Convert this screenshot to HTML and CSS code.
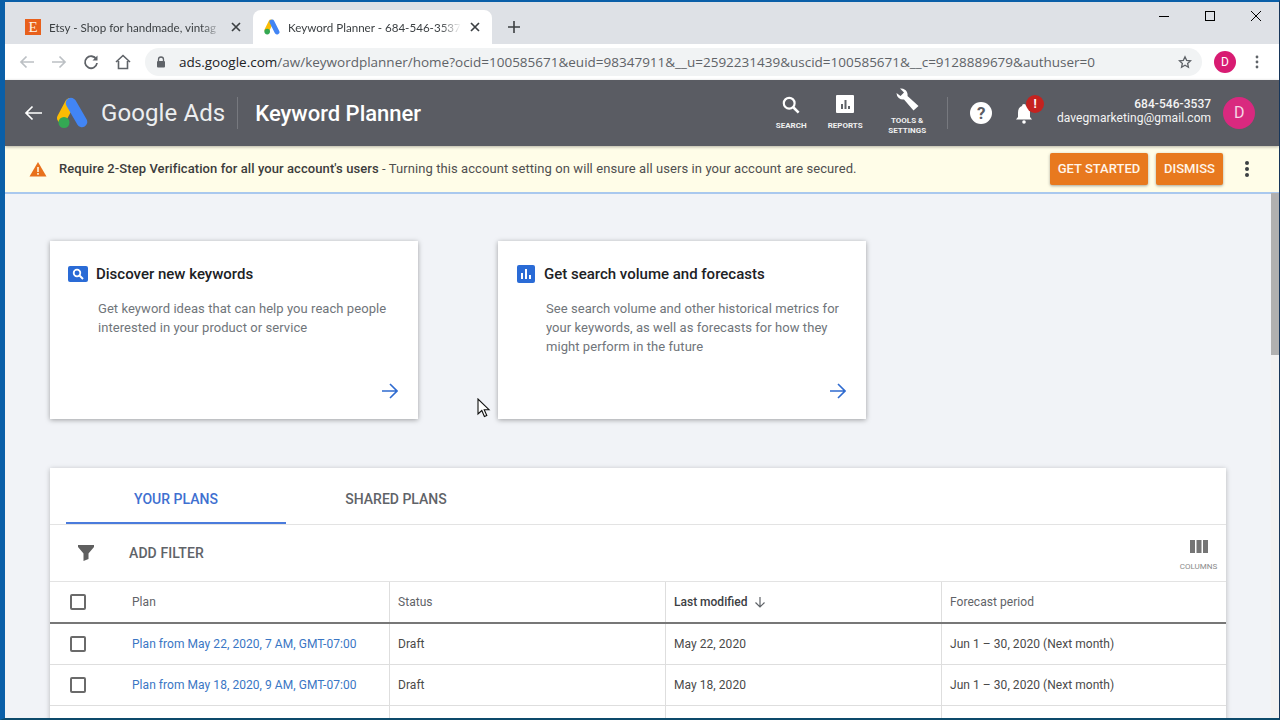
FILE: index.html
```html
<!DOCTYPE html>
<html lang="en">
<head>
<meta charset="utf-8">
<title>Keyword Planner</title>
<link rel="stylesheet" href="styles.css">
</head>
<body>
<div class="window">
  <div class="tabstrip">
    <div class="tab">
      <span class="etsy">E</span>
      <span class="tab-title">Etsy - Shop for handmade, vintag</span>
      <svg class="tab-x" width="10" height="10" viewBox="0 0 10 10"><path d="M1 1l8 8M9 1l-8 8" stroke="#3c4043" stroke-width="1.7"/></svg>
    </div>
    <div class="tab active">
      <svg class="favicon" width="16" height="16" viewBox="0 0 16 16"><path d="M7 3L3 11" stroke="#fbbc04" stroke-width="5" stroke-linecap="round"/><path d="M8 3l5 10" stroke="#4285f4" stroke-width="5" stroke-linecap="round"/><circle cx="3.2" cy="12.6" r="2.8" fill="#34a853"/></svg>
      <span class="tab-title">Keyword Planner - 684-546-3537</span>
      <svg class="tab-x" width="10" height="10" viewBox="0 0 10 10"><path d="M1 1l8 8M9 1l-8 8" stroke="#3c4043" stroke-width="1.7"/></svg>
    </div>
    <svg class="newtab" width="12" height="12" viewBox="0 0 12 12"><path d="M6 0v12M0 6h12" stroke="#3c4043" stroke-width="1.6"/></svg>
    <div class="winctl">
      <svg width="12" height="12" viewBox="0 0 12 12"><path d="M1 6.500h10" stroke="#000" stroke-width="1"/></svg>
      <svg width="12" height="12" viewBox="0 0 12 12"><rect x="1.500" y="1.500" width="9" height="9" fill="none" stroke="#000" stroke-width="1"/></svg>
      <svg width="12" height="12" viewBox="0 0 12 12"><path d="M1 1l10 10M11 1L1 11" stroke="#000" stroke-width="1"/></svg>
    </div>
  </div>

  <div class="toolbar">
    <svg class="tb-icon" width="16" height="16" viewBox="0 0 16 16"><path d="M15 8H2M7.500 2.500L2 8l5.500 5.500" fill="none" stroke="#bcc0c4" stroke-width="1.7"/></svg>
    <svg class="tb-icon" width="16" height="16" viewBox="0 0 16 16"><path d="M1 8h13M8.500 2.500L14 8l-5.500 5.500" fill="none" stroke="#bcc0c4" stroke-width="1.700"/></svg>
    <svg class="tb-icon" width="16" height="16" viewBox="0 0 16 16"><path d="M13.300 5.300A6 6 0 1 0 14 9" fill="none" stroke="#5f6368" stroke-width="1.800"/><path d="M14.500 1.500v5h-5z" fill="#5f6368"/></svg>
    <svg class="tb-icon" width="16" height="16" viewBox="0 0 16 16"><path d="M1 8l7-6.500L15 8M3.500 7v7.500h9V7" fill="none" stroke="#5f6368" stroke-width="1.600"/></svg>
    <div class="omnibox">
      <svg width="10" height="12" viewBox="0 0 10 12"><path d="M2.500 5V3.500a2.500 2.500 0 0 1 5 0V5" fill="none" stroke="#5f6368" stroke-width="1.300"/><rect x="1" y="5" width="8" height="6.500" rx="1" fill="#5f6368"/></svg>
      <span class="url"><span class="host">ads.google.com</span>/aw/keywordplanner/home?ocid=100585671&amp;euid=98347911&amp;__u=2592231439&amp;uscid=100585671&amp;__c=9128889679&amp;authuser=0</span>
      <svg class="star" width="14" height="14" viewBox="0 0 24 24"><path d="M12 3l2.800 6.200 6.700.7-5 4.500 1.400 6.600L12 17.600 6.100 21l1.400-6.600-5-4.500 6.700-.7z" fill="none" stroke="#5f6368" stroke-width="2.200"/></svg>
    </div>
    <span class="chrome-avatar">D</span>
    <svg class="chrome-menu" width="4" height="14" viewBox="0 0 4 14"><circle cx="2" cy="2" r="1.400" fill="#5f6368"/><circle cx="2" cy="7" r="1.400" fill="#5f6368"/><circle cx="2" cy="12" r="1.400" fill="#5f6368"/></svg>
  </div>

  <header class="adsbar">
    <svg class="back" width="18" height="16" viewBox="0 0 18 16"><path d="M18 8H2M8.500 1.500L2 8l6.500 6.500" fill="none" stroke="#fff" stroke-width="1.700"/></svg>
    <svg class="adslogo" width="32" height="32" viewBox="0 0 32 32"><path d="M13 6L5 21" stroke="#fbbc04" stroke-width="10" stroke-linecap="round"/><path d="M14 6l11 19" stroke="#4285f4" stroke-width="10.500" stroke-linecap="round"/><circle cx="7" cy="25.500" r="5.500" fill="#34a853"/></svg>
    <span class="brand">Google Ads</span>
    <span class="vline brand-line"></span>
    <span class="pagetitle">Keyword Planner</span>
    <div class="adstools">
      <div class="tool tool-search">
        <svg width="18" height="18" viewBox="0 0 20 20"><circle cx="8" cy="8" r="6" fill="none" stroke="#fff" stroke-width="2.400"/><path d="M12.500 12.500L18.500 18.500" stroke="#fff" stroke-width="2.800"/></svg>
        <span>SEARCH</span>
      </div>
      <div class="tool tool-reports">
        <svg width="18" height="18" viewBox="0 0 18 18"><rect width="18" height="18" rx="1" fill="#fff"/><path d="M5 9h2v5H5zM8.500 5h2v9h-2zM12 11h2v3h-2z" fill="#5f6368"/></svg>
        <span>REPORTS</span>
      </div>
      <div class="tool tool-settings">
        <svg width="24" height="24" viewBox="0 0 24 24"><path d="M1.500 5A6.500 6.500 0 0 0 9 11.500l9.500 11 5-4.500-11-10A6.500 6.500 0 0 0 5 .5L9 4.500 5.500 8z" fill="#fff"/></svg>
        <span>TOOLS &amp;<br>SETTINGS</span>
      </div>
    </div>
    <span class="vline tools-line"></span>
    <span class="help">?</span>
    <div class="bell">
      <svg width="20" height="22" viewBox="0 0 20 22"><path d="M10 2a2 2 0 0 1 2 2c3 1 4 3.500 4 7v4l2 2.500H2L4 15v-4c0-3.500 1-6 4-7a2 2 0 0 1 2-2z" fill="#fff"/><circle cx="10" cy="20" r="1.800" fill="#fff"/></svg>
      <span class="badge">!</span>
    </div>
    <div class="account">
      <span class="acc-num">684-546-3537</span>
      <span class="acc-mail">davegmarketing@gmail.com</span>
    </div>
    <span class="avatar">D</span>
  </header>

  <div class="banner">
    <svg class="warn" width="18" height="16" viewBox="0 0 18 16"><path d="M9 1l8.500 14.500H.5z" fill="#e8711c"/><path d="M8.200 6h1.600v5H8.200zM8.200 12h1.600v1.700H8.200z" fill="#fff8e0"/></svg>
    <p class="banner-text"><b>Require 2-Step Verification for all your account's users</b> - Turning this account setting on will ensure all users in your account are secured.</p>
    <button class="cta cta-start">GET STARTED</button>
    <button class="cta cta-dismiss">DISMISS</button>
    <svg class="banner-menu" width="6" height="16" viewBox="0 0 6 16"><circle cx="3" cy="2" r="2" fill="#3c4043"/><circle cx="3" cy="8" r="2" fill="#3c4043"/><circle cx="3" cy="14" r="2" fill="#3c4043"/></svg>
  </div>

  <div class="viewport">
    <main class="content">
      <section class="cards">
        <article class="card">
          <h2 class="card-title">
            <span class="card-icon"><svg width="12" height="12" viewBox="0 0 12 12"><circle cx="5" cy="5" r="3.300" fill="none" stroke="#fff" stroke-width="1.800"/><path d="M7.500 7.500L11 11" stroke="#fff" stroke-width="2"/></svg></span>
            Discover new keywords
          </h2>
          <p class="card-desc">Get keyword ideas that can help you reach people interested in your product or service</p>
          <svg class="card-arrow" width="16" height="16" viewBox="0 0 16 16"><path d="M0 8h15M8 1l7 7-7 7" fill="none" stroke="#2f6bd0" stroke-width="1.600"/></svg>
        </article>
        <article class="card">
          <h2 class="card-title">
            <span class="card-icon card-icon-tall"><svg width="12" height="12" viewBox="0 0 12 12"><path d="M1 5h2v6H1zM5 1h2v10H5zM9 7h2v4H9z" fill="#fff"/></svg></span>
            Get search volume and forecasts
          </h2>
          <p class="card-desc">See search volume and other historical metrics for your keywords, as well as forecasts for how they might perform in the future</p>
          <svg class="card-arrow" width="16" height="16" viewBox="0 0 16 16"><path d="M0 8h15M8 1l7 7-7 7" fill="none" stroke="#2f6bd0" stroke-width="1.600"/></svg>
        </article>
      </section>

      <section class="plans">
        <div class="plan-tabs">
          <span class="plan-tab current">YOUR PLANS</span>
          <span class="plan-tab">SHARED PLANS</span>
        </div>
        <div class="filter-row">
          <svg width="16" height="16" viewBox="0 0 16 16"><path d="M0 0h16v2l-5.500 6.500V14L5.500 16V8.500L0 2z" fill="#5f5f5f"/></svg>
          <span class="add-filter">ADD FILTER</span>
          <div class="columns-btn">
            <svg width="18" height="13" viewBox="0 0 18 13"><path d="M0 0h5v13H0zM6.500 0h5v13h-5zM13 0h5v13h-5z" fill="#757575"/></svg>
            <span>COLUMNS</span>
          </div>
        </div>
        <div class="row head">
          <div class="cell first"><span class="check"></span><span>Plan</span></div>
          <div class="cell">Status</div>
          <div class="cell sorted">Last modified
            <svg width="12" height="12" viewBox="0 0 12 12"><path d="M6 1v10M1.500 6.500L6 11l4.500-4.500" fill="none" stroke="#5f6368" stroke-width="1.200"/></svg>
          </div>
          <div class="cell">Forecast period</div>
        </div>
        <div class="row">
          <div class="cell first"><span class="check"></span><a class="plan-link">Plan from May 22, 2020, 7 AM, GMT-07:00</a></div>
          <div class="cell">Draft</div>
          <div class="cell">May 22, 2020</div>
          <div class="cell">Jun 1 – 30, 2020 (Next month)</div>
        </div>
        <div class="row">
          <div class="cell first"><span class="check"></span><a class="plan-link">Plan from May 18, 2020, 9 AM, GMT-07:00</a></div>
          <div class="cell">Draft</div>
          <div class="cell">May 18, 2020</div>
          <div class="cell">Jun 1 – 30, 2020 (Next month)</div>
        </div>
        <div class="row"><div class="cell first"></div><div class="cell"></div><div class="cell"></div><div class="cell"></div></div>
      </section>
    </main>
    <div class="scrollbar"><div class="thumb"></div></div>
    <svg class="cursor" width="14" height="20" viewBox="0 0 14 20"><path d="M1 1v15l3.800-3.500 2.600 6 2.400-1-2.600-5.800H12z" fill="#fff" stroke="#111" stroke-width="1.100"/></svg>
  </div>
</div>
</body>
</html>
```
FILE: styles.css
```css
* { box-sizing: border-box; }
html, body { margin: 0; height: 720px; overflow: hidden; }
body { font-family: Roboto, "Liberation Sans", sans-serif; background: #0a5a9e; }
.window {
  width: 1280px; height: 720px; display: flex; flex-direction: column; overflow: hidden;
  border-style: solid; border-color: #0a5fa8 #17365a #0d4a6b #0a5fa8;
  border-width: 2px 1px 2px 5px;
  background: #f1f3f7;
}
/* browser chrome */
.tabstrip { height: 42px; flex: none; background: #dee1e6; display: flex; align-items: flex-end; padding-left: 9px; position: relative; }
.tab { width: 239px; height: 34px; display: flex; align-items: center; padding: 0 11px; gap: 8px; border-radius: 8px 8px 0 0; font-family: Lato, "Open Sans", sans-serif; font-size: 11.6px; color: #3c4043; }
.tab.active { background: #fff; }
.etsy { width: 16px; height: 16px; flex: none; background: #e8601c; color: #fff3e6; font: 400 15px/16px "Liberation Serif", serif; text-align: center; }
.favicon { flex: none; }
.tab-title { flex: 1; white-space: nowrap; overflow: hidden; -webkit-mask-image: linear-gradient(90deg, #000 88%, transparent); mask-image: linear-gradient(90deg, #000 88%, transparent); }
.tab-x { flex: none; margin-left: 1px; margin-right: 1px; }
.newtab { margin: 0 0 11px 16px; }
.winctl { margin-left: auto; align-self: flex-start; display: flex; gap: 34px; margin-top: 8px; padding-right: 17px; }
.toolbar { height: 36px; flex: none; background: #fff; display: flex; align-items: center; padding-left: 14px; gap: 16px; }
.tb-icon { flex: none; }
.omnibox { width: 1057px; height: 28px; margin-left: -2px; background: #f1f3f4; border-radius: 14px; display: flex; align-items: center; padding-left: 11px; gap: 13px; }
.url { font-family: "Open Sans", "Noto Sans", sans-serif; font-size: 13.5px; color: #5f6368; white-space: nowrap; flex: 1; }
.host { color: #202124; }
.star { margin-right: 10px; }
.chrome-avatar { width: 22px; height: 22px; flex: none; margin-left: -4px; border-radius: 50%; background: #d81b72; color: #fff; font-size: 12px; line-height: 22px; text-align: center; }
.chrome-menu { margin-left: 3px; flex: none; }
/* Google Ads bar */
.adsbar { height: 66px; flex: none; background: #5a5c63; color: #fff; display: flex; align-items: center; padding-left: 19px; box-shadow: 0 1px 3px rgba(0,0,0,.3); position: relative; z-index: 2; }
.back { flex: none; }
.adslogo { flex: none; margin: 0 0 0 15px; }
.brand { margin-left: 12px; font-size: 24px; color: #eceef0; letter-spacing: .1px; }
.vline { width: 1px; height: 32px; background: #77797f; flex: none; }
.brand-line { margin-left: 12px; }
.pagetitle { margin-left: 17px; font-size: 22px; font-weight: 500; }
.adstools { display: flex; align-items: flex-start; margin-left: 349px; height: 66px; }
.tool { display: flex; flex-direction: column; align-items: center; font-size: 8px; font-weight: 700; text-align: center; color: #f0f0f0; line-height: 10px; }
.tool-search { width: 42px; padding-top: 16px; gap: 7px; }
.tool-reports { width: 66px; padding-top: 15px; gap: 8px; }
.tool-settings { width: 58px; padding-top: 8px; gap: 4px; }
.tools-line { margin-left: 11px; }
.help { width: 22px; height: 22px; border-radius: 50%; background: #fff; color: #5a5c63; margin-left: 22px; font-size: 17px; font-weight: 700; line-height: 22px; text-align: center; flex: none; }
.bell { position: relative; width: 20px; height: 22px; margin-left: 22px; flex: none; }
.badge { position: absolute; left: 12px; top: -7px; width: 18px; height: 18px; border-radius: 50%; background: #c5221f; font-size: 12px; font-weight: 700; line-height: 18px; text-align: center; }
.account { width: 160px; margin: 0 0 4px 17px; display: flex; flex-direction: column; align-items: flex-end; font-size: 12px; line-height: 14px; font-weight: 500; color: #f4f4f4; letter-spacing: .05px; }
.acc-mail { font-weight: 400; }
.avatar { width: 32px; height: 32px; margin-left: 12px; flex: none; border-radius: 50%; background: #d9297f; color: #f6d6e6; font-size: 16px; line-height: 32px; text-align: center; }
/* warning banner */
.banner { height: 48px; flex: none; background: #fffde8; border-bottom: 2px solid #a9c8ee; display: flex; align-items: center; padding-left: 24px; position: relative; }
.warn { flex: none; }
.banner-text { margin: 0 0 2px 12px; font-size: 13px; color: #4f4f4f; flex: 1; white-space: nowrap; letter-spacing: .08px; }
.banner-text b { font-weight: 500; color: #3c3c3c; }
.cta { height: 32px; border: 0; border-radius: 2px; background: #e8791e; color: #fff5ea; font: 500 13px Roboto, sans-serif; padding: 0; box-shadow: 0 1px 3px rgba(0,0,0,.35); margin-top: -1px; }
.cta-start { width: 98px; }
.cta-dismiss { width: 67px; margin-left: 8px; }
.banner-menu { flex: none; margin: 0 29px 0 21px; }
/* page */
.viewport { flex: 1; min-height: 0; display: flex; position: relative; }
.content { flex: 1; min-width: 0; padding: 47px 45px 0; overflow: hidden; }
.cards { display: flex; gap: 80px; }
.card { width: 368px; height: 178px; background: #fff; box-shadow: 0 1px 5px rgba(0,0,0,.35); display: flex; flex-direction: column; padding: 24px 20px 20px 18px; }
.card-title { margin: 0; display: flex; align-items: center; gap: 8px; height: 18px; font-size: 15px; font-weight: 500; color: #202124; }
.card-icon { width: 20px; height: 16px; background: #2a6bd6; border-radius: 2px; display: flex; align-items: center; justify-content: center; flex: none; }
.card-icon-tall { width: 18px; height: 18px; margin: 0 1px; }
.card-desc { margin: 16px 0 0 30px; width: 300px; font-size: 13px; line-height: 19px; color: #70757a; letter-spacing: .06px; }
.card-arrow { margin-top: auto; align-self: flex-end; margin-bottom: 0; }
.plans { margin-top: 49px; width: 1176px; background: #fff; box-shadow: 0 1px 5px rgba(0,0,0,.25); }
.plan-tabs { height: 57px; padding-left: 16px; display: flex; border-bottom: 1px solid #e3e3e3; }
.plan-tab { width: 220px; height: 56px; font-size: 14px; font-weight: 500; color: #5f6368; text-align: center; line-height: 63px; }
.plan-tab.current { color: #3f70d0; border-bottom: 2px solid #4a7bdc; }
.filter-row { height: 57px; display: flex; align-items: center; padding-left: 28px; border-bottom: 1px solid #e3e3e3; position: relative; }
.add-filter { margin-left: 35px; font-size: 14px; font-weight: 500; color: #5f6368; letter-spacing: .1px; }
.columns-btn { margin-left: auto; width: 47px; display: flex; flex-direction: column; align-items: center; gap: 9px; font-size: 8px; color: #8a8a8a; margin-top: 5px; margin-right: 4px; }
.row { display: grid; grid-template-columns: 339px 276px 276px 285px; height: 41px; border-bottom: 1px solid #dedede; font-size: 12px; color: #4a4a4a; letter-spacing: .05px; }
.row.head { height: 42px; border-bottom: 2px solid #777; color: #5f6368; }
.cell { display: flex; align-items: center; padding-left: 8px; border-left: 1px solid #dedede; white-space: nowrap; }
.cell.first { border-left: 0; padding-left: 20px; }
.check { width: 16px; height: 16px; flex: none; border: 2px solid #6a6a6a; border-radius: 2px; margin-right: 46px; }
.sorted { font-weight: 500; color: #3c4043; gap: 7px; letter-spacing: 0; }
.plan-link { color: #3a76c4; }
.scrollbar { width: 8px; flex: none; background: #f1f1f1; }
.thumb { height: 162px; background: #b0b0b0; margin-top: -1px; }
.cursor { position: absolute; left: 472px; top: 204px; }
```
